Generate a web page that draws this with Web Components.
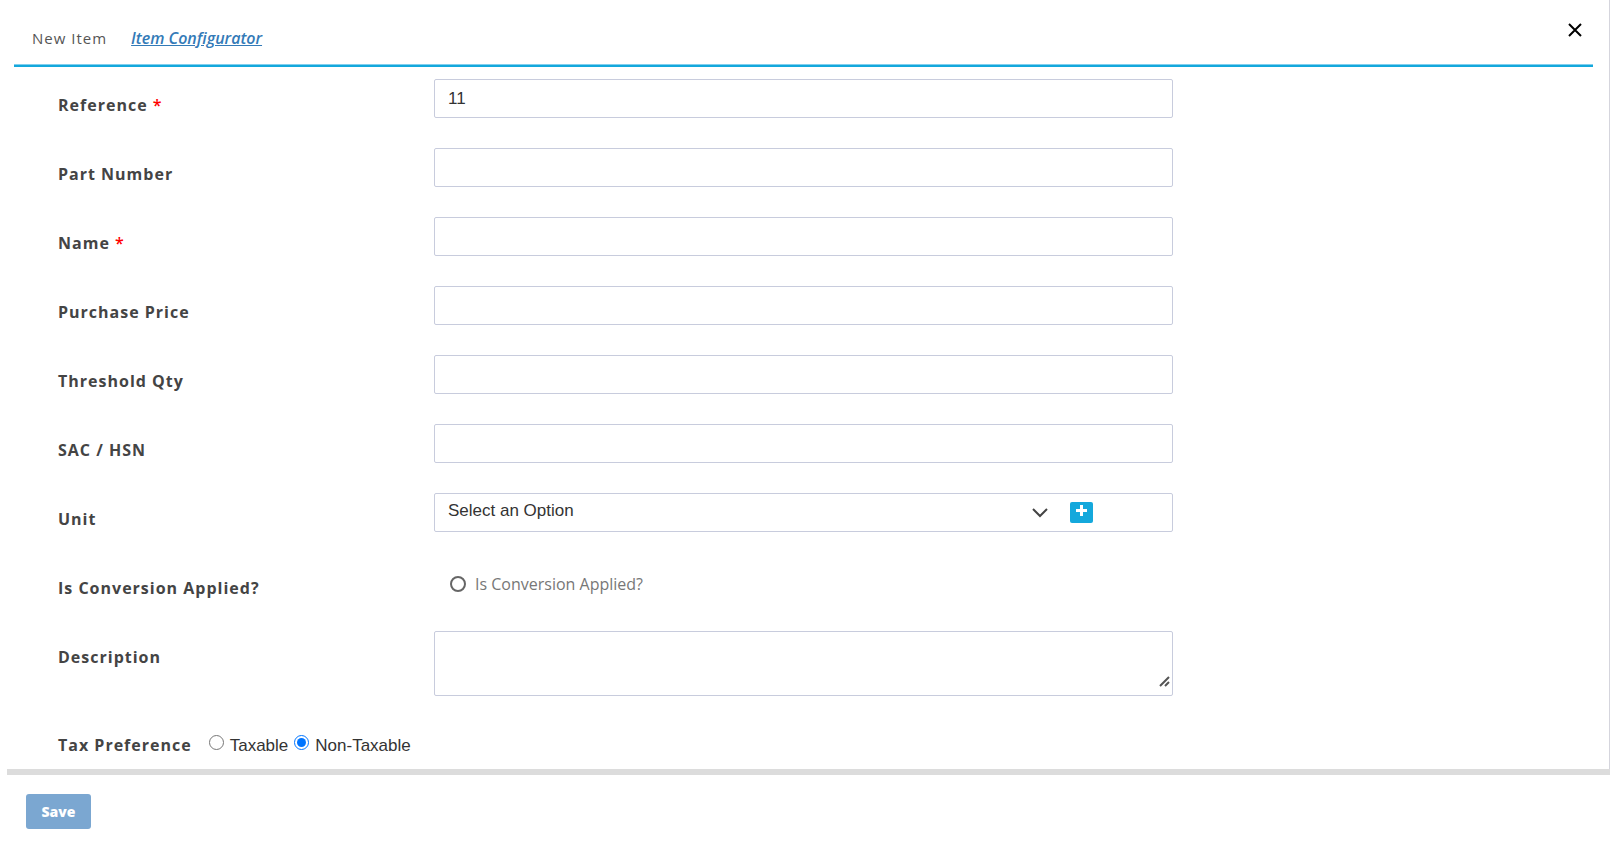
<!DOCTYPE html>
<html lang="en">
<head>
<meta charset="utf-8">
<title>New Item</title>
<style>
    body {
        margin: 0;
        background: #fff;
        color: #333;
        font-family: "Open Sans", sans-serif;
        font-size: 16px;
    }
</style>
</head>
<body>
<item-dialog>
    <dialog-header slot="header" heading="New Item">
        <a href="#configurator">Item Configurator</a>
    </dialog-header>
    <text-field label="Reference" value="11" required></text-field>
    <text-field label="Part Number"></text-field>
    <text-field label="Name" required></text-field>
    <text-field label="Purchase Price"></text-field>
    <text-field label="Threshold Qty"></text-field>
    <text-field label="SAC / HSN"></text-field>
    <select-field label="Unit" placeholder="Select an Option"></select-field>
    <toggle-field label="Is Conversion Applied?"></toggle-field>
    <area-field label="Description"></area-field>
    <tax-field label="Tax Preference"></tax-field>
    <save-button slot="footer">Save</save-button>
</item-dialog>

<script>
const fieldStyle = `
    <style>
        :host {
            display: grid;
            grid-template-columns: 376fr 739fr 420fr;
            align-items: start;
            min-height: 69px;
        }

        * {
            box-sizing: border-box;
        }

        .label {
            padding-top: 14px;
            color: #444;
            font-size: 16px;
            font-weight: 700;
            line-height: 24px;
            letter-spacing: 1px;
        }

        .required {
            color: #f00;
            font-weight: 600;
        }

        .box {
            width: 100%;
            height: 39px;
            border: 1px solid #c8ccdd;
            border-radius: 2px;
            background: #fff;
        }

        input, select, textarea {
            margin: 0;
            color: #333;
            font-family: "Liberation Sans", Arial, sans-serif;
            font-size: 17px;
        }
    </style>
`;

class FormField extends HTMLElement {
    constructor() {
        super();
        this.attachShadow({mode: "open"});
    }

    connectedCallback() {
        this.shadowRoot.innerHTML = fieldStyle + this.render();
    }

    get label() {
        return this.getAttribute("label");
    }

    labelTemplate() {
        const star = this.hasAttribute("required") ? ` <span class="required">*</span>` : "";
        return `<label class="label" for="control">${this.label}${star}</label>`;
    }
}

customElements.define("text-field", class extends FormField {
    render() {
        return `
            <style>
                input {
                    padding: 0 13px;
                }
            </style>
            ${this.labelTemplate()}
            <input class="box" id="control" type="text" value="${this.getAttribute("value") || ""}">
        `;
    }
});

customElements.define("select-field", class extends FormField {
    render() {
        return `
            <style>
                .box {
                    display: flex;
                    align-items: center;
                    gap: 22px;
                    padding-right: 79px;
                }

                .select {
                    display: grid;
                    flex: 1;
                    align-items: center;
                }

                select, svg.chevron {
                    grid-area: 1 / 1;
                }

                select {
                    appearance: none;
                    height: 37px;
                    padding: 0 24px 4px 13px;
                    border: 0;
                    background: none;
                }

                .chevron {
                    justify-self: end;
                    pointer-events: none;
                }

                button {
                    display: flex;
                    justify-content: center;
                    width: 23px;
                    height: 21px;
                    padding: 3px 0 0;
                    border: 0;
                    border-radius: 2px;
                    background: #14a8dc;
                }
            </style>
            ${this.labelTemplate()}
            <div class="box">
                <div class="select">
                    <select id="control"><option>${this.getAttribute("placeholder")}</option></select>
                    <svg class="chevron" width="16" height="10" viewBox="0 0 16 10" fill="none" stroke="#444" stroke-width="2"><path d="M1 1l7 7 7-7"/></svg>
                </div>
                <button type="button" aria-label="Add unit">
                    <svg width="11" height="11" viewBox="0 0 11 11" fill="#fff"><path d="M4 0h3v4h4v3H7v4H4V7H0V4h4z"/></svg>
                </button>
            </div>
        `;
    }
});

customElements.define("toggle-field", class extends FormField {
    render() {
        return `
            <style>
                .toggle {
                    display: flex;
                    align-items: center;
                    gap: 9px;
                    padding: 10px 0 0 16px;
                    color: #777;
                    font-size: 16px;
                    line-height: 24px;
                }

                input {
                    appearance: none;
                    width: 16px;
                    height: 16px;
                    border: 2px solid #666;
                    border-radius: 50%;
                }

                input:checked {
                    background: #666;
                }
            </style>
            ${this.labelTemplate()}
            <label class="toggle"><input id="control" type="checkbox">${this.label}</label>
        `;
    }
});

customElements.define("area-field", class extends FormField {
    render() {
        return `
            <style>
                .box {
                    position: relative;
                    height: 65px;
                    padding-bottom: 7px;
                }

                textarea {
                    display: block;
                    width: 100%;
                    height: 56px;
                    padding: 6px 13px;
                    border: 0;
                    outline: 0;
                    background: none;
                    resize: vertical;
                }

                textarea::-webkit-resizer {
                    background: none;
                }

                .grip {
                    position: absolute;
                    right: 2px;
                    bottom: 8px;
                    pointer-events: none;
                }
            </style>
            ${this.labelTemplate()}
            <div class="box">
                <textarea id="control"></textarea>
                <svg class="grip" width="11" height="11" viewBox="0 0 11 11" fill="none" stroke="#555" stroke-width="2"><path d="M1 10l9-9M6 10l4-4"/></svg>
            </div>
        `;
    }
});

customElements.define("tax-field", class extends FormField {
    render() {
        return `
            <style>
                :host {
                    display: flex;
                    min-height: 0;
                    padding-top: 19px;
                }

                .options {
                    display: flex;
                    gap: 6px;
                    padding: 15px 0 0 17px;
                    font-family: "Liberation Sans", Arial, sans-serif;
                    font-size: 17px;
                    line-height: 24px;
                }

                .options label {
                    display: flex;
                    gap: 6px;
                }

                input {
                    width: 15px;
                    height: 15px;
                    margin-top: 1px;
                    accent-color: #0075ff;
                }
            </style>
            <span class="label" id="caption">${this.label}</span>
            <div class="options" role="radiogroup" aria-labelledby="caption">
                <label><input type="radio" name="tax">Taxable</label>
                <label><input type="radio" name="tax" checked>Non-Taxable</label>
            </div>
        `;
    }
});

customElements.define("dialog-header", class extends HTMLElement {
    constructor() {
        super();
        this.attachShadow({mode: "open"}).innerHTML = `
            <style>
                :host {
                    display: flex;
                    align-items: flex-start;
                    gap: 24px;
                    padding: 26px 10px 15px 18px;
                    border-bottom: 2px solid #14a8dc;
                    box-shadow: inset 0 -1px #80cfee;
                    color: #555;
                    font-size: 15px;
                    line-height: 24px;
                    letter-spacing: 1px;
                }

                h1 {
                    margin: 0;
                    font-size: 15px;
                    font-weight: 400;
                }

                ::slotted(a) {
                    color: #337ab7;
                    font-size: 16px;
                    font-style: italic;
                    font-weight: 600;
                    letter-spacing: 0;
                }

                button {
                    display: flex;
                    margin: -4px 0 0 auto;
                    padding: 0;
                    border: 0;
                    background: none;
                }
            </style>
            <h1></h1>
            <slot></slot>
            <button type="button" aria-label="Close">
                <svg width="16" height="16" viewBox="0 0 16 16" fill="none" stroke="#000" stroke-width="2"><path d="M2 2l12 12M14 2L2 14"/></svg>
            </button>
        `;
    }

    connectedCallback() {
        this.shadowRoot.querySelector("h1").textContent = this.getAttribute("heading");
    }
});

customElements.define("save-button", class extends HTMLElement {
    constructor() {
        super();
        this.attachShadow({mode: "open"}).innerHTML = `
            <style>
                :host {
                    display: inline-flex;
                }

                button {
                    min-width: 65px;
                    height: 35px;
                    padding: 0 15px;
                    border: 0;
                    border-radius: 3px;
                    background: #7ba7d1;
                    color: #fff;
                    font: 800 14px "Open Sans", sans-serif;
                }
            </style>
            <button type="button"><slot></slot></button>
        `;
    }
});

customElements.define("item-dialog", class extends HTMLElement {
    constructor() {
        super();
        this.attachShadow({mode: "open"}).innerHTML = `
            <style>
                :host {
                    display: flex;
                    flex-direction: column;
                    min-height: 100vh;
                }

                main {
                    flex: 1;
                    padding: 0 16px 0 14px;
                    border-right: 1px solid #d5d5dd;
                }

                form {
                    padding: 12px 0 0 44px;
                }

                footer {
                    display: flex;
                    margin-left: 7px;
                    padding: 19px 19px 14px;
                    border-top: 6px solid #dcdcdc;
                }
            </style>
            <main>
                <slot name="header"></slot>
                <form><slot></slot></form>
            </main>
            <footer><slot name="footer"></slot></footer>
        `;
    }
});
</script>
</body>
</html>
